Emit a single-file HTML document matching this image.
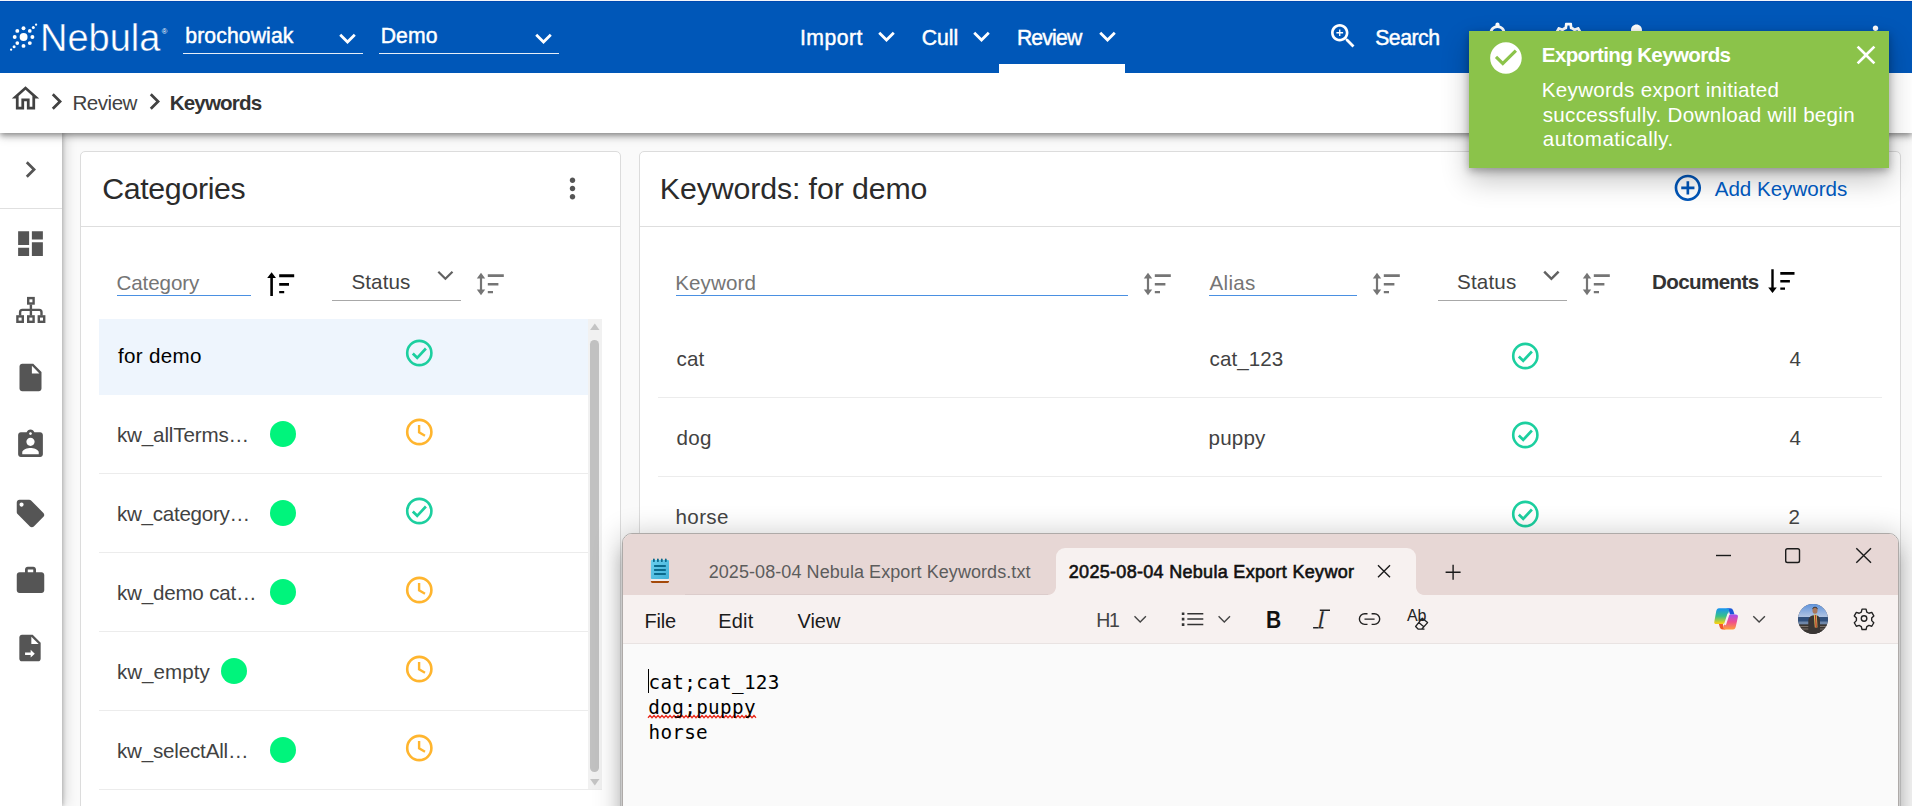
<!DOCTYPE html>
<html lang="en"><head><meta charset="utf-8"><title>Nebula - Keywords</title>
<style>
*{box-sizing:border-box;margin:0;padding:0}
html,body{width:1912px;height:806px;overflow:hidden;background:#fafafa;font-family:"Liberation Sans",sans-serif}
.a{position:absolute}
.t{position:absolute;white-space:pre;display:block}
svg{position:absolute;overflow:visible}
#side{left:0;top:132px;width:62px;height:674px;background:#fff;box-shadow:1px 0 4px rgba(0,0,0,.22), 3px 0 12px rgba(0,0,0,.16)}
#crumb{left:0;top:72px;width:1912px;height:60.5px;background:#fff;box-shadow:0 2px 6px rgba(0,0,0,.42), 0 5px 9px rgba(0,0,0,.12)}
#top{left:0;top:0;width:1912px;height:72.6px;background:#0057b8;border-top:1px solid #f3f6fb;box-shadow:inset 0 1px 0 #0049b1}
.card{background:#fff;border:1px solid #dcdcdc;border-radius:5px}
.hl{background:#dedede;height:1px}
.rl{background:#ececec;height:1px}
#toast{left:1469px;top:31px;width:420px;height:136.5px;background:#8bc34a;box-shadow:0 3px 8px rgba(0,0,0,.3), 0 12px 26px rgba(0,0,0,.24)}
#np{left:622.4px;top:533px;width:1276.2px;height:300px;border-radius:10px 10px 0 0;background:#fafafa;border:1px solid #aeaaa8;box-shadow:0 3px 28px 3px rgba(0,0,0,.2), 0 18px 16px 1px rgba(0,0,0,.17);overflow:hidden}
.dot{width:26px;height:26px;border-radius:50%;background:#00f47c}

</style></head>
<body>
<!-- sidebar -->
<div id="side" class="a"></div>
<div class="a hl" style="left:0;top:207.5px;width:62px;background:#e0e0e0"></div>
<svg style="left:13.8px;top:152.7px" width="33" height="33" viewBox="0 0 24 24"><path fill="#555" d="M10 6L8.59 7.41 13.17 12l-4.58 4.59L10 18l6-6z"/></svg>
<svg style="left:13.9px;top:226.5px" width="33" height="33" viewBox="0 0 24 24"><path fill="#555" d="M3 13h8V3H3v10zm0 8h8v-6H3v6zm10 0h8V11h-8v10zm0-18v6h8V3h-8z"/></svg>
<svg style="left:0;top:0" width="62" height="806" viewBox="0 0 62 806" fill="none" stroke="#555" stroke-width="2.4">
  <rect x="28.2" y="298.1" width="5.4" height="5.4"/>
  <rect x="17.4" y="316.4" width="5.4" height="5.4"/>
  <rect x="28.2" y="316.4" width="5.4" height="5.4"/>
  <rect x="38.8" y="316.4" width="5.4" height="5.4"/>
  <path d="M30.9 304.5V315.5M20.1 315.5V312.2Q20.1 309.9 22.4 309.9H39.2Q41.5 309.9 41.5 312.2V315.5"/>
</svg>
<svg style="left:13.9px;top:361.2px" width="33" height="33" viewBox="0 0 24 24"><path fill="#555" d="M6 2c-1.1 0-1.99.9-1.99 2L4 20c0 1.1.89 2 1.99 2H18c1.1 0 2-.9 2-2V8l-6-6H6zm7 7V3.500L18.500 9H13z"/></svg>
<svg style="left:13.9px;top:428.4px" width="33" height="33" viewBox="0 0 24 24"><path fill="#555" d="M19 3h-4.180C14.400 1.840 13.300 1 12 1c-1.300 0-2.400.84-2.820 2H5c-1.100 0-2 .9-2 2v14c0 1.100.9 2 2 2h14c1.100 0 2-.9 2-2V5c0-1.100-.9-2-2-2zm-7 0c.55 0 1 .45 1 1s-.45 1-1 1-1-.45-1-1 .45-1 1-1zm0 4c1.660 0 3 1.340 3 3s-1.340 3-3 3-3-1.340-3-3 1.340-3 3-3zm6 12H6v-1.400c0-2 4-3.100 6-3.100s6 1.100 6 3.100V19z"/></svg>
<svg style="left:13.9px;top:496.5px" width="33" height="33" viewBox="0 0 24 24"><path fill="#555" d="M21.410 11.580l-9-9C12.050 2.220 11.550 2 11 2H4c-1.100 0-2 .9-2 2v7c0 .55.22 1.050.59 1.420l9 9c.36.36.86.58 1.410.58.55 0 1.050-.22 1.410-.59l7-7c.37-.36.59-.86.59-1.410 0-.55-.23-1.060-.59-1.420zM5.500 7C4.670 7 4 6.330 4 5.500S4.670 4 5.500 4 7 4.670 7 5.500 6.330 7 5.500 7z"/></svg>
<svg style="left:13.9px;top:564px" width="33" height="33" viewBox="0 0 24 24"><path fill="#555" d="M20 6h-4V4c0-1.110-.89-2-2-2h-4c-1.110 0-2 .89-2 2v2H4c-1.110 0-1.990.89-1.990 2L2 19c0 1.110.89 2 2 2h16c1.110 0 2-.89 2-2V8c0-1.110-.89-2-2-2zm-6 0h-4V4h4v2z"/></svg>
<svg style="left:14.3px;top:632px" width="32" height="32" viewBox="0 0 24 24"><path fill="#555" fill-rule="evenodd" d="M6 2c-1.100 0-1.990.9-1.990 2L4 20c0 1.100.89 2 1.990 2H18c1.100 0 2-.9 2-2V8l-6-6H6zm7 7V3.500L18.500 9H13zM8.300 15.300h4.200v-1.900l3.100 2.850-3.100 2.850v-1.900H8.300z"/></svg>

<!-- categories card -->
<div class="a card" style="left:80px;top:151px;width:541px;height:700px"></div>
<div class="a hl" style="left:81px;top:226.3px;width:539px"></div>
<svg style="left:555.9px;top:171.9px" width="33" height="33" viewBox="0 0 24 24"><path fill="#555" d="M12 8c1.100 0 2-.9 2-2s-.9-2-2-2-2 .9-2 2 .9 2 2 2zm0 2c-1.100 0-2 .9-2 2s.9 2 2 2 2-.9 2-2-.9-2-2-2zm0 6c-1.100 0-2 .9-2 2s.9 2 2 2 2-.9 2-2-.9-2-2-2z"/></svg>
<div class="a" style="left:117px;top:294.8px;width:134px;height:1.2px;background:#4a90e2"></div>
<div class="a" style="left:332px;top:300px;width:129px;height:1px;background:#a8a8a8"></div>
<svg class="sortasc" style="left:266px;top:271px" width="30" height="26" viewBox="266 271 30 26"><path fill="#000" d="M270.300 296V278h-3.100L271.600 272.200 276 278h-3.100V296zM279.200 274.300h15v2.900h-15zM279.200 283.100h9.800v2.700h-9.800zM279.200 291.000h5v2.300h-5z"/></svg>
<svg style="left:437px;top:269px" width="18" height="13" viewBox="437 269 18 13"><path fill="none" stroke="#616161" stroke-width="2.2" d="M438.300 271.700L445.400 278.700 452.500 271.700"/></svg>
<svg style="left:475px;top:271px" width="30" height="26" viewBox="475 271 30 26"><path fill="#757575" d="M479.900 278.400h-3.100L481 272.800 485.200 278.400h-3.100v11.200h3.100L481 295.200 476.800 289.600h3.100zM487.800 274.300h16v2.700h-16zM487.800 283.000h10.600v2.600h-10.600zM487.800 291.000h5.200v2.300h-5.200z"/></svg>
<!-- rows -->
<div class="a" style="left:99px;top:319.3px;width:488.500px;height:75.400px;background:#eef5fd"></div>
<div class="a rl" style="left:99px;top:473px;width:488.500px"></div>
<div class="a rl" style="left:99px;top:552px;width:488.500px"></div>
<div class="a rl" style="left:99px;top:631px;width:488.500px"></div>
<div class="a rl" style="left:99px;top:710px;width:488.500px"></div>
<div class="a rl" style="left:99px;top:789px;width:503px"></div>
<!-- scrollbar -->
<div class="a" style="left:587.500px;top:319.300px;width:14.500px;height:470px;background:#f1f1f1"></div>
<div class="a" style="left:590.200px;top:340px;width:8.800px;height:431.500px;background:#c1c1c1;border-radius:4.400px"></div>
<svg style="left:589px;top:322px" width="12" height="10" viewBox="0 0 12 10"><path fill="#c4c4c4" d="M5.800 1.500L10.500 8H1.100z"/></svg>
<svg style="left:589px;top:777px" width="12" height="10" viewBox="0 0 12 10"><path fill="#c4c4c4" d="M5.800 8.500L10.500 2H1.100z"/></svg>
<!-- dots -->
<div class="a dot" style="left:270px;top:421.400px"></div>
<div class="a dot" style="left:270px;top:500.400px"></div>
<div class="a dot" style="left:270px;top:579.400px"></div>
<div class="a dot" style="left:221.200px;top:658.400px"></div>
<div class="a dot" style="left:270px;top:737.400px"></div>
<!-- status icons (categories) -->
<svg class="chk" style="left:405.400px;top:338.800px" width="28" height="28" viewBox="0 0 28 28"><circle cx="14.300" cy="14" r="12.100" fill="none" stroke="#1ccf9f" stroke-width="2.600"/><path fill="none" stroke="#1ccf9f" stroke-width="2.700" d="M7.800 14.500L12.200 18.800 20.900 9.500"/></svg>
<svg class="clk" style="left:405.400px;top:417.900px" width="28" height="28" viewBox="0 0 28 28"><circle cx="14.300" cy="14" r="12.100" fill="none" stroke="#ffb52e" stroke-width="2.600"/><path fill="none" stroke="#ffb52e" stroke-width="2.400" d="M14.100 7V14.400L20 17.700"/></svg>
<svg class="chk" style="left:405.400px;top:496.900px" width="28" height="28" viewBox="0 0 28 28"><circle cx="14.300" cy="14" r="12.100" fill="none" stroke="#1ccf9f" stroke-width="2.600"/><path fill="none" stroke="#1ccf9f" stroke-width="2.700" d="M7.800 14.500L12.200 18.800 20.900 9.500"/></svg>
<svg class="clk" style="left:405.400px;top:575.900px" width="28" height="28" viewBox="0 0 28 28"><circle cx="14.300" cy="14" r="12.100" fill="none" stroke="#ffb52e" stroke-width="2.600"/><path fill="none" stroke="#ffb52e" stroke-width="2.400" d="M14.100 7V14.400L20 17.700"/></svg>
<svg class="clk" style="left:405.400px;top:654.900px" width="28" height="28" viewBox="0 0 28 28"><circle cx="14.300" cy="14" r="12.100" fill="none" stroke="#ffb52e" stroke-width="2.600"/><path fill="none" stroke="#ffb52e" stroke-width="2.400" d="M14.100 7V14.400L20 17.700"/></svg>
<svg class="clk" style="left:405.400px;top:733.900px" width="28" height="28" viewBox="0 0 28 28"><circle cx="14.300" cy="14" r="12.100" fill="none" stroke="#ffb52e" stroke-width="2.600"/><path fill="none" stroke="#ffb52e" stroke-width="2.400" d="M14.100 7V14.400L20 17.700"/></svg>

<!-- keywords card -->
<div class="a card" style="left:639px;top:151px;width:1262px;height:700px"></div>
<div class="a hl" style="left:640px;top:226.300px;width:1260px"></div>
<svg style="left:1672.200px;top:172.100px" width="31.700" height="31.700" viewBox="0 0 24 24"><path fill="#0056b8" d="M13 7h-2v4H7v2h4v4h2v-4h4v-2h-4V7zm-1-5C6.480 2 2 6.480 2 12s4.480 10 10 10 10-4.480 10-10S17.520 2 12 2zm0 18c-4.410 0-8-3.590-8-8s3.590-8 8-8 8 3.590 8 8-3.590 8-8 8z"/></svg>
<div class="a" style="left:676px;top:294.800px;width:452px;height:1.200px;background:#4a90e2"></div>
<div class="a" style="left:1209px;top:294.800px;width:148px;height:1.200px;background:#4a90e2"></div>
<div class="a" style="left:1438px;top:300px;width:129px;height:1px;background:#a8a8a8"></div>
<svg style="left:1142.300px;top:270.600px" width="30" height="26" viewBox="475 271 30 26"><path fill="#757575" d="M479.900 278.400h-3.100L481 272.800 485.200 278.400h-3.100v11.200h3.100L481 295.200 476.800 289.600h3.100zM487.800 274.300h16v2.700h-16zM487.800 283.000h10.600v2.600h-10.600zM487.800 291.000h5.200v2.300h-5.200z"/></svg>
<svg style="left:1370.800px;top:270.600px" width="30" height="26" viewBox="475 271 30 26"><path fill="#757575" d="M479.900 278.400h-3.100L481 272.800 485.200 278.400h-3.100v11.200h3.100L481 295.200 476.800 289.600h3.100zM487.800 274.300h16v2.700h-16zM487.800 283.000h10.600v2.600h-10.600zM487.800 291.000h5.200v2.300h-5.200z"/></svg>
<svg style="left:1580.800px;top:270.600px" width="30" height="26" viewBox="475 271 30 26"><path fill="#757575" d="M479.900 278.400h-3.100L481 272.800 485.200 278.400h-3.100v11.200h3.100L481 295.200 476.800 289.600h3.100zM487.800 274.300h16v2.700h-16zM487.800 283.000h10.600v2.600h-10.600zM487.800 291.000h5.200v2.300h-5.200z"/></svg>
<svg style="left:1543px;top:268.600px" width="18" height="13" viewBox="437 269 18 13"><path fill="none" stroke="#616161" stroke-width="2.500" d="M438.200 271.600L445.400 278.800 452.600 271.600"/></svg>
<svg style="left:1765px;top:266px" width="34" height="30" viewBox="1765 266 34 30"><path fill="#000" d="M1771.300 269.200V287.600h-3.100L1772.500 292.900 1776.800 287.600h-3.100V269.200zM1780.300 272h14.200v2.800h-14.200zM1780.300 279.900h9.600v2.600h-9.600zM1780.300 287.400h4.700v2.300h-4.700z"/></svg>
<div class="a rl" style="left:657.500px;top:397px;width:1224.500px"></div>
<div class="a rl" style="left:657.500px;top:476px;width:1224.500px"></div>
<svg class="chk" style="left:1511.400px;top:341.800px" width="28" height="28" viewBox="0 0 28 28"><circle cx="14.300" cy="14" r="12.100" fill="none" stroke="#1ccf9f" stroke-width="2.600"/><path fill="none" stroke="#1ccf9f" stroke-width="2.700" d="M7.800 14.500L12.200 18.800 20.900 9.500"/></svg>
<svg class="chk" style="left:1511.400px;top:420.900px" width="28" height="28" viewBox="0 0 28 28"><circle cx="14.300" cy="14" r="12.100" fill="none" stroke="#1ccf9f" stroke-width="2.600"/><path fill="none" stroke="#1ccf9f" stroke-width="2.700" d="M7.800 14.500L12.200 18.800 20.900 9.500"/></svg>
<svg class="chk" style="left:1511.400px;top:499.900px" width="28" height="28" viewBox="0 0 28 28"><circle cx="14.300" cy="14" r="12.100" fill="none" stroke="#1ccf9f" stroke-width="2.600"/><path fill="none" stroke="#1ccf9f" stroke-width="2.700" d="M7.800 14.500L12.200 18.800 20.900 9.500"/></svg>

<!-- breadcrumb bar -->
<div id="crumb" class="a"></div>
<svg style="left:8.700px;top:82.400px" width="33" height="33" viewBox="0 0 24 24"><path fill="#424242" d="M12 5.690l5 4.500V18h-2v-6H9v6H7v-7.810l5-4.500M12 3L2 12h3v8h6v-6h2v6h6v-8h3L12 3z"/></svg>
<svg style="left:40px;top:84.500px" width="33" height="33" viewBox="0 0 24 24"><path fill="#424242" d="M10 6L8.590 7.410 13.170 12l-4.580 4.590L10 18l6-6z"/></svg>
<svg style="left:138.300px;top:84.500px" width="33" height="33" viewBox="0 0 24 24"><path fill="#424242" d="M10 6L8.590 7.410 13.170 12l-4.580 4.590L10 18l6-6z"/></svg>

<!-- top bar -->
<div id="top" class="a"></div>
<svg style="left:0;top:0" width="180" height="72" viewBox="0 0 180 72" fill="#fff">
  <circle cx="23.600" cy="37" r="3.950"/>
  <circle cx="23.500" cy="28.200" r="1.950"/><circle cx="23.500" cy="45.900" r="1.950"/>
  <circle cx="14.700" cy="37" r="1.950"/><circle cx="32.400" cy="37" r="1.950"/>
  <circle cx="17.300" cy="30.900" r="1.950"/><circle cx="29.800" cy="43.100" r="1.950"/>
  <circle cx="29.800" cy="30.900" r="1.850"/><circle cx="17.300" cy="43.100" r="1.850"/>
  <circle cx="33.300" cy="27.400" r="1.500"/><circle cx="36.100" cy="24.700" r="1.150"/>
  <circle cx="14.100" cy="46.700" r="1.500"/><circle cx="11.100" cy="49.700" r="1.150"/>
</svg>
<div class="a" style="left:183px;top:53px;width:180px;height:1.200px;background:#e6eef8"></div>
<div class="a" style="left:379px;top:53px;width:180px;height:1.200px;background:#e6eef8"></div>
<svg style="left:331.200px;top:21.600px" width="33" height="33" viewBox="0 0 24 24"><path fill="#fff" d="M7.410 8.590L12 13.170l4.590-4.580L18 10l-6 6-6-6 1.410-1.410z"/></svg>
<svg style="left:526.600px;top:21.600px" width="33" height="33" viewBox="0 0 24 24"><path fill="#fff" d="M7.410 8.590L12 13.170l4.590-4.580L18 10l-6 6-6-6 1.410-1.410z"/></svg>
<svg style="left:870.300px;top:19.800px" width="33" height="33" viewBox="0 0 24 24"><path fill="#fff" d="M7.410 8.590L12 13.170l4.590-4.580L18 10l-6 6-6-6 1.410-1.410z"/></svg>
<svg style="left:965.100px;top:19.800px" width="33" height="33" viewBox="0 0 24 24"><path fill="#fff" d="M7.410 8.590L12 13.170l4.590-4.580L18 10l-6 6-6-6 1.410-1.410z"/></svg>
<svg style="left:1090.900px;top:19.800px" width="33" height="33" viewBox="0 0 24 24"><path fill="#fff" d="M7.410 8.590L12 13.170l4.590-4.580L18 10l-6 6-6-6 1.410-1.410z"/></svg>
<div class="a" style="left:999px;top:63.800px;width:126.200px;height:9px;background:#fff"></div>
<svg style="left:1326.900px;top:20.100px" width="32.200" height="32.200" viewBox="0 0 24 24"><path fill="#fff" d="M15.500 14h-.79l-.28-.27C15.410 12.590 16 11.110 16 9.500 16 5.910 13.090 3 9.500 3S3 5.910 3 9.500 5.910 16 9.500 16c1.610 0 3.090-.59 4.230-1.570l.27.28v.79l5 4.990L20.490 19l-4.990-5zm-6 0C7.010 14 5 11.990 5 9.500S7.010 5 9.500 5 14 7.010 14 9.500 11.990 14 9.500 14zM12 10h-2v2H9v-2H7V9h2V7h1v2h2v1z"/></svg>
<svg style="left:1480.800px;top:19.100px" width="33" height="33" viewBox="0 0 24 24"><path fill="#fff" d="M12 22c1.100 0 2-.9 2-2h-4c0 1.100.9 2 2 2zm6-6v-5c0-3.070-1.630-5.640-4.500-6.320V4c0-.83-.67-1.500-1.500-1.500s-1.500.67-1.500 1.500v.68C7.640 5.360 6 7.920 6 11v5l-2 2v1h16v-1l-2-2zm-2 1H8v-6c0-2.480 1.510-4.500 4-4.500s4 2.020 4 4.500v6z"/></svg>
<svg style="left:1552.300px;top:19.700px" width="33" height="33" viewBox="0 0 24 24"><path fill="#fff" d="M19.430 12.980c.04-.32.07-.64.070-.98 0-.34-.03-.66-.07-.98l2.110-1.650c.19-.15.24-.42.120-.64l-2-3.460c-.09-.16-.26-.25-.44-.25-.06 0-.12.010-.17.030l-2.490 1c-.52-.4-1.080-.73-1.690-.98l-.38-2.650C14.460 2.180 14.250 2 14 2h-4c-.25 0-.46.18-.49.420l-.38 2.650c-.61.25-1.170.59-1.690.98l-2.490-1c-.06-.02-.12-.03-.18-.03-.17 0-.34.09-.43.250l-2 3.460c-.13.220-.07.49.12.64l2.110 1.650c-.04.32-.07.650-.07.980 0 .33.030.66.070.98l-2.110 1.650c-.19.15-.24.42-.12.640l2 3.460c.09.160.26.250.44.250.06 0 .12-.01.170-.03l2.490-1c.52.400 1.080.73 1.690.98l.38 2.650c.03.240.24.420.49.420h4c.25 0 .46-.18.490-.42l.38-2.650c.61-.25 1.170-.59 1.690-.98l2.490 1c.06.02.12.03.18.030.17 0 .34-.09.43-.25l2-3.460c.12-.22.070-.49-.12-.64l-2.110-1.650zm-1.980-1.710c.04.31.05.52.05.73 0 .21-.02.43-.05.730l-.14 1.130.89.700 1.080.84-.7 1.210-1.270-.51-1.040-.42-.9.680c-.43.320-.84.560-1.250.73l-1.060.43-.16 1.130-.2 1.350h-1.400l-.19-1.350-.16-1.130-1.060-.43c-.43-.18-.83-.41-1.230-.71l-.91-.7-1.060.43-1.270.51-.7-1.210 1.080-.84.89-.7-.14-1.130c-.03-.31-.05-.54-.05-.74s.02-.43.050-.73l.14-1.130-.89-.7-1.080-.84.7-1.210 1.270.51 1.040.42.900-.68c.43-.32.840-.56 1.250-.73l1.060-.43.160-1.130.2-1.350h1.390l.19 1.350.16 1.130 1.060.43c.43.180.83.410 1.230.71l.91.700 1.060-.43 1.270-.51.700 1.210-1.070.85-.89.700.14 1.130zM12 8c-2.210 0-4 1.790-4 4s1.790 4 4 4 4-1.790 4-4-1.790-4-4-4zm0 6c-1.100 0-2-.9-2-2s.9-2 2-2 2 .9 2 2-.9 2-2 2z"/></svg>
<svg style="left:1619.500px;top:19.300px" width="33" height="33" viewBox="0 0 24 24"><path fill="#fff" d="M12 12c2.210 0 4-1.790 4-4s-1.790-4-4-4-4 1.790-4 4 1.790 4 4 4zm0 2c-2.670 0-8 1.340-8 4v2h16v-2c0-2.660-5.330-4-8-4z"/></svg>
<svg style="left:1858.900px;top:19.700px" width="33" height="33" viewBox="0 0 24 24"><path fill="#fff" d="M12 8c1.100 0 2-.9 2-2s-.9-2-2-2-2 .9-2 2 .9 2 2 2zm0 2c-1.100 0-2 .9-2 2s.9 2 2 2 2-.9 2-2-.9-2-2-2zm0 6c-1.100 0-2 .9-2 2s.9 2 2 2 2-.9 2-2-.9-2-2-2z"/></svg>

<!-- notepad window -->
<div id="np" class="a">
  <div class="a" style="left:0;top:0;width:1277px;height:61.600px;background:#e7d7d5"></div>
  <div class="a" style="left:0;top:60.700px;width:1277px;height:49.800px;background:#f7f1f0;border-bottom:1px solid #e9e3e2"></div>
  <div class="a" style="left:61.500px;top:59.700px;width:365px;height:1.200px;background:#dccccb"></div>
  <!-- active tab -->
  <div class="a" style="left:432.800px;top:14.200px;width:360px;height:47px;background:#f7f1f0;border-radius:9px 9px 0 0"></div>
  <div class="a" style="left:424.800px;top:52.800px;width:8px;height:8px;background:radial-gradient(circle at 0 0,#e7d7d5 7.500px,#f7f1f0 8.200px)"></div>
  <div class="a" style="left:792.800px;top:52.800px;width:8px;height:8px;background:radial-gradient(circle at 100% 0,#e7d7d5 7.500px,#f7f1f0 8.200px)"></div>
</div>
<!-- notepad icon -->
<svg style="left:648px;top:556px" width="24" height="30" viewBox="648 556 24 30">
  <defs><linearGradient id="npi" x1="0" y1="0" x2="1" y2="1"><stop offset="0" stop-color="#6bcfee"/><stop offset="1" stop-color="#3fafd6"/></linearGradient></defs>
  <rect x="650.9" y="559.9" width="18.100" height="19.100" rx="1" fill="url(#npi)"/>
  <rect x="650.9" y="579.3" width="18.100" height="1.500" fill="#f2f2f4"/>
  <path d="M650.900 580.900h18.100v.7q0 1.300-1.300 1.300h-15.500q-1.300 0-1.300-1.300z" fill="#a4490a"/>
  <path stroke="#0b6a8c" stroke-width="1.800" stroke-linecap="round" d="M653.900 559.300v1.900M657.900 559.300v1.900M661.800 559.300v1.900M665.800 559.300v1.900"/>
  <path stroke="#0b6a8c" stroke-width="1.800" d="M654.100 566h11.700M654.100 570h11.700M654.100 574h11.700"/>
</svg>
<!-- tab close, plus -->
<svg style="left:0;top:0" width="1912" height="806" viewBox="0 0 1912 806" fill="none" stroke="#1b1b1b" stroke-width="1.400">
  <path d="M1378 565.200L1390 577.200M1390 565.200L1378 577.200"/>
  <path d="M1445.600 572.300H1460.600M1453.100 564.800V579.800"/>
  <path d="M1716 555.500H1731"/>
  <rect x="1785.700" y="548.700" width="13.800" height="13.800" rx="1.800"/>
  <path d="M1856.300 548.200L1871 562.700M1871 548.200L1856.300 562.700"/>
  <!-- H1 chevron, list, chevron -->
  <path stroke="#444" d="M1134.500 616.300L1140.200 622 1145.900 616.300"/>
  <path stroke="#444" d="M1218.600 616.300L1224.300 622 1230 616.300"/>
  <path stroke="#333" stroke-width="1.500" d="M1187.300 613.700H1203.300M1187.300 619.100H1203.300M1187.300 624.600H1203.300"/>
  <path stroke="#333" stroke-width="2.600" d="M1181.800 613.700h2.600M1181.800 619.100h2.600M1181.800 624.600h2.600"/>
  <!-- link -->
  <path stroke="#222" stroke-width="1.400" d="M1367.500 613.800H1364.700a5.300 5.300 0 0 0 0 10.600H1367.500M1371.600 613.800H1374.400a5.300 5.300 0 0 1 0 10.600H1371.600M1364.500 619.100H1374.600"/>
  <path stroke="#222" stroke-width="1.400" d="M1319.800 610.300H1330M1313.100 627.800H1323.400"/>
  <!-- eraser -->
  <path stroke="#222" stroke-width="1.300" stroke-linejoin="round" d="M1422.300 618.200L1427.600 622.600 1421.600 629.200H1418.300L1415.600 626.500zM1418.500 622.300L1423.800 626.800M1417.500 629.200H1424.500"/>
  <!-- copilot chevron -->
  <path stroke="#444" d="M1753.300 616.300L1759.100 622 1764.900 616.300"/>
  <!-- gear -->
  <g transform="translate(1864.050 618.500) scale(.92) translate(-1864 -619.100)">
  <circle cx="1864" cy="619.100" r="3" stroke="#222" stroke-width="1.500"/>
  <path stroke="#222" stroke-width="1.500" stroke-linejoin="round" d="M1861.800 608.900h4.400l.8 3.200 2.300 1.300 3.100-.9 2.200 3.800-2.300 2.300v2.800l2.300 2.300-2.200 3.800-3.100-.9-2.300 1.300-.8 3.200h-4.400l-.8-3.200-2.300-1.300-3.100.9-2.200-3.800 2.300-2.300v-2.800l-2.300-2.300 2.200-3.800 3.100.9 2.300-1.300z"/>
  </g>
</svg>
<!-- avatar -->
<svg style="left:1798px;top:604px" width="30" height="30" viewBox="0 0 30 30">
  <defs><clipPath id="av"><circle cx="15" cy="15" r="15"/></clipPath>
  <linearGradient id="sky" x1="0" y1="0" x2="0" y2="1"><stop offset="0" stop-color="#5f93dc"/><stop offset="1" stop-color="#b5c6e2"/></linearGradient></defs>
  <g clip-path="url(#av)">
    <rect width="30" height="30" fill="#4a4f5c"/>
    <rect y="0" width="30" height="13.500" fill="url(#sky)"/>
    <rect y="13" width="30" height="5" fill="#31507c"/>
    <rect y="17.500" width="30" height="3" fill="#6e86a8"/>
    <rect y="20.500" width="30" height="10" fill="#3b3631"/>
    <path d="M0 22.500h30M0 25h30" stroke="#8a7f78" stroke-width=".8"/>
    <path d="M10.300 30V17q0-4.500 4-5.500l3.500-.5q4.200.8 4.200 5.500V30z" fill="#3a3634"/>
    <ellipse cx="17" cy="6.500" rx="2.500" ry="3.300" fill="#a8765a"/>
    <path d="M14.500 5.500q2.500-4 5 0v-1.300q-2.500-2.800-5 0z" fill="#2e2620"/>
    <path d="M15.800 10.500h2.900l.8 13h-2.700z" fill="#d8c25e"/>
    <path d="M16.900 11h1l1 12.500h-1.300z" fill="#b8322a"/>
  </g>
</svg>
<!-- copilot -->
<svg style="left:1713px;top:607px" width="26" height="24" viewBox="1713 607 26 24">
  <defs>
    <linearGradient id="cp1" x1="0" y1="0" x2="0" y2="1"><stop offset="0" stop-color="#1893f2"/><stop offset=".5" stop-color="#35c18a"/><stop offset=".95" stop-color="#f6d015"/></linearGradient>
    <linearGradient id="cp2" x1="0" y1="0" x2="0" y2="1"><stop offset="0" stop-color="#a44cf2"/><stop offset=".5" stop-color="#f0508c"/><stop offset="1" stop-color="#ffa03a"/></linearGradient>
  </defs>
  <path d="M1726 608.300h4.200q2.300 0 3 2.300l1.300 4h-4.500l-1-3.500q-.7-2.800-3-2.800z" fill="#1a56d8"/>
  <path d="M1726 629.600h-3.200q-2.300 0-3-2.300l-1-3.500h4l.6 2.500q.7 3.300 2.600 3.300z" fill="#f2582a"/>
  <path d="M1719 608.300h8q2.800 0 2 2.800l-3.200 10.500q-.8 2.500-3.400 2.500h-5.800q-3 0-2.200-2.900l1.800-9.900q.6-3 2.800-3z" fill="url(#cp1)"/>
  <path d="M1733 629.600h-7.500q-2.800 0-2-2.800l3.200-9.800q.8-2.500 3.400-2.500h5.500q3 0 2.200 2.900l-2 9.200q-.6 3-2.800 3z" fill="url(#cp2)"/>
  <path d="M1728.300 614.500l-3.100 9.500" stroke="#f7f1f0" stroke-width="2.200" stroke-linecap="round"/>
</svg>
<!-- cursor + squiggle -->
<div class="a" style="left:647.900px;top:669.200px;width:1.100px;height:24.300px;background:#000"></div>
<svg style="left:647.600px;top:713.700px" width="112" height="6" viewBox="0 0 112 6"><path fill="none" stroke="#e8281a" stroke-width="1.300" d="M0 3.700l2 -2.200l2 2.200l2 -2.200l2 2.200l2 -2.200l2 2.200l2 -2.200l2 2.200l2 -2.200l2 2.200l2 -2.200l2 2.200l2 -2.200l2 2.200l2 -2.200l2 2.200l2 -2.200l2 2.200l2 -2.200l2 2.200l2 -2.200l2 2.200l2 -2.200l2 2.200l2 -2.200l2 2.200l2 -2.200l2 2.200l2 -2.200l2 2.200l2 -2.200l2 2.200l2 -2.200l2 2.200l2 -2.200l2 2.200l2 -2.200l2 2.200l2 -2.200l2 2.200l2 -2.200l2 2.200l2 -2.200l2 2.200l2 -2.200l2 2.200l2 -2.200l2 2.200l2 -2.200l2 2.200l2 -2.200l2 2.200l2 -2.200l2 2.200"/></svg>

<!-- toast -->
<div id="toast" class="a"></div>
<svg style="left:1487.100px;top:38.600px" width="37.900" height="37.900" viewBox="0 0 24 24"><path fill="#fff" d="M12 2C6.480 2 2 6.480 2 12s4.480 10 10 10 10-4.480 10-10S17.520 2 12 2zm-2 15l-5-5 1.410-1.410L10 14.170l7.590-7.590L19 8l-9 9z"/></svg>
<svg style="left:1850.300px;top:38.600px" width="32" height="32" viewBox="0 0 24 24"><path fill="#fff" d="M19 6.410L17.590 5 12 10.590 6.410 5 5 6.410 10.590 12 5 17.590 6.410 19 12 13.410 17.590 19 19 17.590 13.410 12z"/></svg>

<div id="texts">
<span class="t" style="left:40.00px;top:17px;font:400 38px/42px 'Liberation Sans', sans-serif;letter-spacing:0.003px;color:#fff;-webkit-text-stroke:0.45px #0056b8;">Nebula</span>
<span class="t" style="left:161.80px;top:26px;font:400 7.5px/12px 'Liberation Sans', sans-serif;letter-spacing:0.000px;color:#fff;">®</span>
<span class="t" style="left:185.30px;top:23px;font:400 21.2px/25px 'Liberation Sans', sans-serif;letter-spacing:0.103px;color:#fff;-webkit-text-stroke:0.45px #fff;">brochowiak</span>
<span class="t" style="left:380.70px;top:23px;font:400 21.2px/25px 'Liberation Sans', sans-serif;letter-spacing:0.089px;color:#fff;-webkit-text-stroke:0.45px #fff;">Demo</span>
<span class="t" style="left:799.90px;top:25px;font:400 21.2px/25px 'Liberation Sans', sans-serif;letter-spacing:0.508px;color:#fff;-webkit-text-stroke:0.45px #fff;">Import</span>
<span class="t" style="left:921.70px;top:25px;font:400 21.2px/25px 'Liberation Sans', sans-serif;letter-spacing:-0.031px;color:#fff;-webkit-text-stroke:0.45px #fff;">Cull</span>
<span class="t" style="left:1016.90px;top:25px;font:400 21.2px/25px 'Liberation Sans', sans-serif;letter-spacing:-0.834px;color:#fff;-webkit-text-stroke:0.45px #fff;">Review</span>
<span class="t" style="left:1375.20px;top:25px;font:400 21.2px/25px 'Liberation Sans', sans-serif;letter-spacing:-0.470px;color:#fff;-webkit-text-stroke:0.45px #fff;">Search</span>
<span class="t" style="left:72.50px;top:90px;font:400 20.6px/25px 'Liberation Sans', sans-serif;letter-spacing:-0.510px;color:#424242;">Review</span>
<span class="t" style="left:169.70px;top:90px;font:700 20.6px/25px 'Liberation Sans', sans-serif;letter-spacing:-0.853px;color:#333;">Keywords</span>
<span class="t" style="left:1541.80px;top:42px;font:700 20.6px/25px 'Liberation Sans', sans-serif;letter-spacing:-0.647px;color:#fff;">Exporting Keywords</span>
<span class="t" style="left:1541.80px;top:77px;font:400 20.6px/25px 'Liberation Sans', sans-serif;letter-spacing:0.299px;color:#fff;">Keywords export initiated</span>
<span class="t" style="left:1542.80px;top:102px;font:400 20.6px/25px 'Liberation Sans', sans-serif;letter-spacing:0.278px;color:#fff;">successfully. Download will begin</span>
<span class="t" style="left:1542.80px;top:126px;font:400 20.6px/25px 'Liberation Sans', sans-serif;letter-spacing:0.473px;color:#fff;">automatically.</span>
<span class="t" style="left:102.20px;top:172px;font:400 30.3px/34px 'Liberation Sans', sans-serif;letter-spacing:-0.329px;color:#2b2b2b;">Categories</span>
<span class="t" style="left:659.80px;top:172px;font:400 30.3px/34px 'Liberation Sans', sans-serif;letter-spacing:-0.104px;color:#2b2b2b;">Keywords: for demo</span>
<span class="t" style="left:1714.70px;top:176px;font:400 20.6px/25px 'Liberation Sans', sans-serif;letter-spacing:-0.017px;color:#0056b8;">Add Keywords</span>
<span class="t" style="left:116.50px;top:270px;font:400 20.6px/25px 'Liberation Sans', sans-serif;letter-spacing:-0.109px;color:#757575;">Category</span>
<span class="t" style="left:351.50px;top:269px;font:400 20.6px/25px 'Liberation Sans', sans-serif;letter-spacing:0.083px;color:#424242;">Status</span>
<span class="t" style="left:117.90px;top:343px;font:400 20.6px/25px 'Liberation Sans', sans-serif;letter-spacing:0.326px;color:#000;">for demo</span>
<span class="t" style="left:116.90px;top:422px;font:400 20.6px/25px 'Liberation Sans', sans-serif;letter-spacing:-0.144px;color:#424242;">kw_allTerms…</span>
<span class="t" style="left:116.90px;top:501px;font:400 20.6px/25px 'Liberation Sans', sans-serif;letter-spacing:-0.264px;color:#424242;">kw_category…</span>
<span class="t" style="left:116.90px;top:580px;font:400 20.6px/25px 'Liberation Sans', sans-serif;letter-spacing:-0.203px;color:#424242;">kw_demo cat…</span>
<span class="t" style="left:116.90px;top:659px;font:400 20.6px/25px 'Liberation Sans', sans-serif;letter-spacing:0.014px;color:#424242;">kw_empty</span>
<span class="t" style="left:116.90px;top:738px;font:400 20.6px/25px 'Liberation Sans', sans-serif;letter-spacing:-0.184px;color:#424242;">kw_selectAll…</span>
<span class="t" style="left:675.20px;top:270px;font:400 20.6px/25px 'Liberation Sans', sans-serif;letter-spacing:0.105px;color:#757575;">Keyword</span>
<span class="t" style="left:1209.60px;top:270px;font:400 20.6px/25px 'Liberation Sans', sans-serif;letter-spacing:0.265px;color:#757575;">Alias</span>
<span class="t" style="left:1457.00px;top:269px;font:400 20.6px/25px 'Liberation Sans', sans-serif;letter-spacing:0.183px;color:#424242;">Status</span>
<span class="t" style="left:1652.00px;top:269px;font:700 20.6px/25px 'Liberation Sans', sans-serif;letter-spacing:-0.611px;color:#333;">Documents</span>
<span class="t" style="left:676.50px;top:346px;font:400 20.6px/25px 'Liberation Sans', sans-serif;letter-spacing:0.175px;color:#424242;">cat</span>
<span class="t" style="left:1209.60px;top:346px;font:400 20.6px/25px 'Liberation Sans', sans-serif;letter-spacing:0.045px;color:#424242;">cat_123</span>
<span class="t" style="left:1789.60px;top:346px;font:400 20.6px/25px 'Liberation Sans', sans-serif;letter-spacing:0.000px;color:#424242;">4</span>
<span class="t" style="left:676.50px;top:425px;font:400 20.6px/25px 'Liberation Sans', sans-serif;letter-spacing:0.297px;color:#424242;">dog</span>
<span class="t" style="left:1208.60px;top:425px;font:400 20.6px/25px 'Liberation Sans', sans-serif;letter-spacing:0.147px;color:#424242;">puppy</span>
<span class="t" style="left:1789.60px;top:425px;font:400 20.6px/25px 'Liberation Sans', sans-serif;letter-spacing:0.000px;color:#424242;">4</span>
<span class="t" style="left:675.50px;top:504px;font:400 20.6px/25px 'Liberation Sans', sans-serif;letter-spacing:0.360px;color:#424242;">horse</span>
<span class="t" style="left:1788.60px;top:504px;font:400 20.6px/25px 'Liberation Sans', sans-serif;letter-spacing:0.000px;color:#424242;">2</span>
<span class="t" style="left:708.70px;top:561px;font:400 18px/22px 'Liberation Sans', sans-serif;letter-spacing:0.073px;color:#5c5c5c;">2025-08-04 Nebula Export Keywords.txt</span>
<span class="t" style="left:1068.80px;top:561px;font:400 18px/22px 'Liberation Sans', sans-serif;letter-spacing:0.301px;color:#111;-webkit-text-stroke:0.6px #111;">2025-08-04 Nebula Export Keywor</span>
<span class="t" style="left:644.50px;top:609px;font:400 20px/24px 'Liberation Sans', sans-serif;letter-spacing:-0.201px;color:#1b1b1b;">File</span>
<span class="t" style="left:718.30px;top:609px;font:400 20px/24px 'Liberation Sans', sans-serif;letter-spacing:0.165px;color:#1b1b1b;">Edit</span>
<span class="t" style="left:797.40px;top:609px;font:400 20px/24px 'Liberation Sans', sans-serif;letter-spacing:0.018px;color:#1b1b1b;">View</span>
<span class="t" style="left:1096.30px;top:608px;font:400 19.5px/24px 'Liberation Sans', sans-serif;letter-spacing:-1.382px;color:#444;">H1</span>
<span class="t" style="left:648.50px;top:671px;font:400 19.3px/23px 'DejaVu Sans Mono', 'Liberation Mono', monospace;letter-spacing:0.322px;color:#000;">cat;cat_123</span>
<span class="t" style="left:648.30px;top:696px;font:400 19.3px/23px 'DejaVu Sans Mono', 'Liberation Mono', monospace;letter-spacing:0.354px;color:#000;">dog;puppy</span>
<span class="t" style="left:648.50px;top:721px;font:400 19.3px/23px 'DejaVu Sans Mono', 'Liberation Mono', monospace;letter-spacing:0.267px;color:#000;">horse</span>
<span class="t" style="left:1265.80px;top:607px;font:700 23.4px/27px 'Liberation Sans', sans-serif;letter-spacing:0.000px;color:#111;transform:scaleX(.9);transform-origin:0 0;">B</span>
<span class="t" style="left:1317.60px;top:606px;font:400 24.5px/28px 'Liberation Sans', sans-serif;letter-spacing:0.000px;color:#222;font-style:italic;-webkit-text-stroke:0.25px #f7f1f0;">I</span>
<span class="t" style="left:1407.00px;top:606px;font:400 16px/20px 'Liberation Sans', sans-serif;letter-spacing:-0.172px;color:#222;">Ab</span>
</div>
</body></html>
